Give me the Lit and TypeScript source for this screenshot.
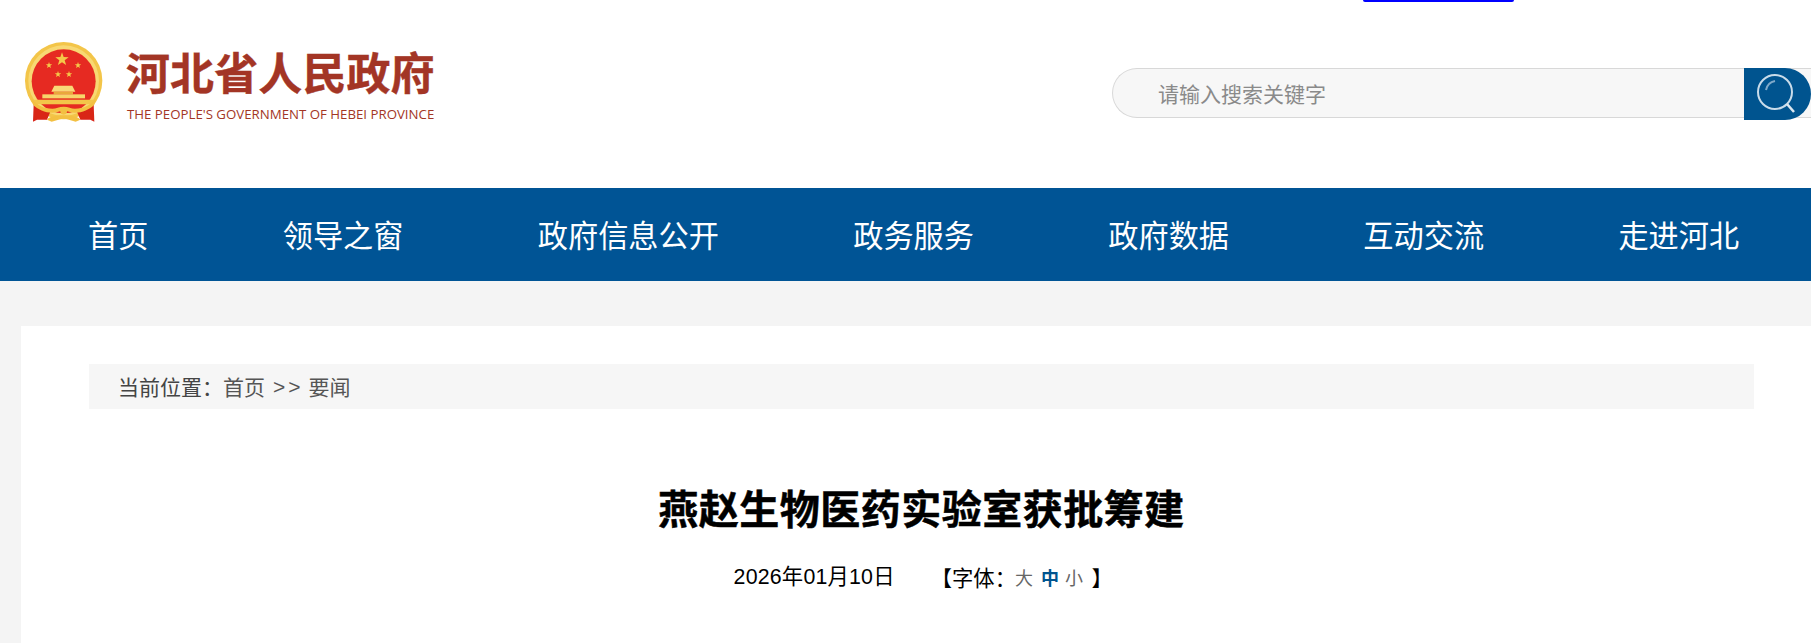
import { LitElement, html, css, svg } from "lit";
import { customElement } from "lit/decorators.js";

const star = (cx: number, cy: number, r: number) => {
  const pts: string[] = [];
  for (let i = 0; i < 10; i++) {
    const rad = i % 2 ? r * 0.4 : r;
    const a = -Math.PI / 2 + (i * Math.PI) / 5;
    pts.push(`${(cx + rad * Math.cos(a)).toFixed(2)},${(cy + rad * Math.sin(a)).toFixed(2)}`);
  }
  return svg`<polygon points=${pts.join(" ")} fill="#f5c94a"/>`;
};

@customElement("app-root")
export class AppRoot extends LitElement {
  static styles = css`
    :host { display: block; font-family: "Noto Sans CJK SC", "Liberation Sans", sans-serif; background: #f4f4f4; height: 643px; overflow: hidden; position: relative; }
    .top-mark { position: absolute; left: 1363px; top: 0; width: 151px; height: 2px; background: #0000ff; border-radius: 0 0 3px 3px; }
    header { height: 188px; background: #fff; display: flex; justify-content: space-between; box-sizing: border-box; padding: 42px 0 0 25px; }
    .logo { display: flex; align-items: flex-start; gap: 23px; height: 90px; }
    .logo svg { width: 78px; height: 80px; display: block; }
    .logo-text { display: flex; flex-direction: column; color: #a33525; width: 310px; padding-top: 4px; }
    .cn { font-size: 44px; line-height: 50px; font-weight: 700; white-space: nowrap; letter-spacing: 0.1px; -webkit-text-stroke: 0.4px #a33525; }
    .en { font-family: "Open Sans", "Liberation Sans", sans-serif; font-size: 13.25px; line-height: 16px; white-space: nowrap; margin: 10px 0 0 1px; }
    .search { width: 699px; height: 50px; display: flex; margin-top: 26px; border: 1px solid #d8d8d8; border-right: 0; border-radius: 25px 0 0 25px; background: #f7f7f7; box-sizing: border-box; }
    .ph { flex: 1; padding-left: 45px; font-size: 21px; line-height: 48px; color: #8a8a8a; }
    .btn { width: 67px; height: 52px; margin-top: -1px; background: #00548f; border-radius: 0 26px 26px 0; display: flex; align-items: center; padding-left: 11px; box-sizing: border-box; }
    .btn svg { width: 40px; height: 46px; display: block; }
    nav { height: 93px; background: #005495; display: flex; align-items: center; gap: 134.3px; padding: 0 0 2px 88px; box-sizing: border-box; color: #fff; font-size: 30.2px; white-space: nowrap; }
    .card { margin: 45px 0 0 21px; background: #fff; box-sizing: border-box; padding: 38px 57px 0 68px; height: 400px; }
    .crumb { height: 45px; background: #f6f6f6; padding-left: 29px; font-size: 21px; line-height: 45px; color: #555; white-space: pre; display: flex; }
    .crumb .lbl { color: #444; }
    .crumb .sep { font-family: "Liberation Sans", sans-serif; letter-spacing: 3px; margin: 0 5px 0 8px; }
    h1 { margin: 69px 0 0; text-align: center; font-size: 40px; line-height: 58px; font-weight: 700; color: #000; letter-spacing: 0.5px; -webkit-text-stroke: 0.5px #000; }
    .meta { margin-top: 26px; padding-left: 3.5px; display: flex; justify-content: center; font-size: 21.33px; line-height: 30px; color: #000; white-space: pre; gap: 36px; }
    .date { font-family: "Liberation Sans", "Noto Sans CJK SC", sans-serif; letter-spacing: 0.2px; }
    .size { display: flex; align-items: center; }
    .opt { font-size: 18px; color: #666; }
    .opt.big { margin: 0 4px 0 -1px; }
    .opt.on { color: #00548f; font-weight: 700; margin: 0 2px 0 4px; }
    .opt.small { margin: 0 8.5px 0 4px; }
  `;

  render() {
    return html`
      <div class="top-mark"></div>
      <header>
        <div class="logo">
          <svg viewBox="46 35 234 240" aria-hidden="true">
            <defs><filter id="soft" x="-5%" y="-5%" width="110%" height="110%"><feGaussianBlur stdDeviation="1.2"/></filter></defs>
            <g filter="url(#soft)">
              <circle cx="162" cy="151" r="116" fill="#f3c548"/>
              <circle cx="162" cy="151" r="106" fill="#f8d873"/>
              <circle cx="162" cy="153" r="96" fill="#e62c20"/>
              ${star(157, 87, 21)}${star(118, 105, 10)}${star(205, 105, 10)}${star(145, 132, 10)}${star(178, 132, 10)}
              <path d="M125 184l9-18h54l9 18z" fill="#f9d978"/>
              <rect x="132" y="184" width="58" height="8" fill="#e9a93a"/>
              <rect x="98" y="192" width="128" height="12" fill="#f7d56a"/>
              <path d="M68 208h188l-8 14H78z" fill="#f3c548"/>
              <path d="M72 222c16 12 30 20 50 22l-10 24H82l-12 6zM252 222c-16 12-30 20-50 22l10 24h30l12 6z" fill="#d92518"/>
              <path d="M66 205c14 18 36 30 62 30 12 0 20-6 34-6s22 6 34 6c26 0 48-12 62-30l-4 18c-14 14-36 24-58 24-14 0-22-6-34-6s-20 6-34 6c-22 0-44-10-58-24z" fill="#f3c043"/>
              <path d="M112 268c8-18 92-18 100 0l-14 6-36-10-36 10z" fill="#f3c043"/>
              <circle cx="162" cy="243" r="10" fill="#f3c043"/>
            </g>
          </svg>
          <div class="logo-text">
            <div class="cn">河北省人民政府</div>
            <div class="en">THE PEOPLE'S GOVERNMENT OF HEBEI PROVINCE</div>
          </div>
        </div>
        <div class="search">
          <div class="ph">请输入搜索关键字</div>
          <div class="btn">
            <svg viewBox="0 0 40 46" fill="none" aria-hidden="true">
              <circle cx="20" cy="21" r="17" stroke="#c9dcea" stroke-width="2"/>
              <path d="M32 33l7 8" stroke="#dbe7f0" stroke-width="2.5"/>
              <path d="M11 19c1-5 4-8 9-9" stroke="#7fa9c9" stroke-width="2"/>
            </svg>
          </div>
        </div>
      </header>
      <nav>
        <span>首页</span><span>领导之窗</span><span>政府信息公开</span><span>政务服务</span><span>政府数据</span><span>互动交流</span><span>走进河北</span>
      </nav>
      <main class="card">
        <div class="crumb"><span class="lbl">当前位置：</span><span>首页</span><span class="sep">&gt;&gt;</span><span>要闻</span></div>
        <h1>燕赵生物医药实验室获批筹建</h1>
        <div class="meta">
          <span class="date">2026年01月10日</span>
          <span class="size">【字体：<span class="opt big">大</span><span class="opt on">中</span><span class="opt small">小</span>】</span>
        </div>
      </main>
    `;
  }
}
